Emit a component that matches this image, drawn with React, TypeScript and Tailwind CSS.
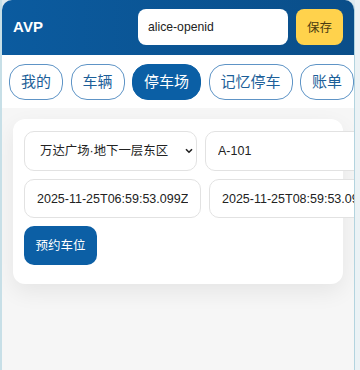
import React, { useState } from 'react';

const TABS = ['我的', '车辆', '停车场', '记忆停车', '账单'];

const App: React.FC = () => {
  const [openid, setOpenid] = useState('alice-openid');
  const [active, setActive] = useState('停车场');
  const [lot, setLot] = useState('wanda-b1-east');
  const [spot, setSpot] = useState('A-101');
  const [start, setStart] = useState('2025-11-25T06:59:53.099Z');
  const [end, setEnd] = useState('2025-11-25T08:59:53.099Z');

  return (
    <div className="h-[370px] flex bg-[#dfeaef] font-['Liberation_Sans','Noto_Sans_CJK_SC',sans-serif] overflow-hidden">
      {/* left edge strip */}
      <div className="w-[2px] shrink-0 bg-[#c7dfe7]" />

      <div className="w-[353px] shrink-0 flex flex-col overflow-hidden rounded-t-[10px] border-r border-[#b3d4df] bg-[#f6f6f6]">
        {/* Header */}
        <div className="h-[55px] shrink-0 flex items-center justify-between pl-[11px] pr-[11px] pb-[1px] bg-gradient-to-r from-[#0b5b9f] to-[#0a4e89]">
          <span className="text-white font-bold text-[15px] tracking-[0.2px]">AVP</span>
          <div className="flex items-center gap-2">
            <input
              value={openid}
              onChange={(e) => setOpenid(e.target.value)}
              className="w-[150px] h-[36px] rounded-[8px] bg-white px-[10px] text-[12.2px] text-[#222] outline-none"
            />
            <button className="w-[47px] h-[36px] rounded-[8px] bg-[#ffd24c] text-[12.5px] text-[#4b3c12] font-['Noto_Sans_CJK_SC',sans-serif]">
              保存
            </button>
          </div>
        </div>

        {/* Tabs */}
        <div className="h-[53px] shrink-0 flex items-center gap-[7.5px] pl-[7px] bg-white overflow-hidden">
          {TABS.map((t) => (
            <button
              key={t}
              onClick={() => setActive(t)}
              className={
                t === active
                  ? "shrink-0 h-[36px] px-[11px] rounded-[16px] border border-[#0b5fa5] bg-[#0b5fa5] text-white text-[15px] font-['Noto_Sans_CJK_SC',sans-serif]"
                  : "shrink-0 h-[36px] px-[11px] rounded-[16px] border border-[#5e94c6] bg-white text-[#1d5f99] text-[15px] font-['Noto_Sans_CJK_SC',sans-serif]"
              }
            >
              {t}
            </button>
          ))}
        </div>

        {/* Reservation card */}
        <div className="mx-[11px] mt-[11px] rounded-[12px] bg-white pt-[12px] pb-[19px] px-[11px] shadow-[0_8px_22px_rgba(0,0,0,0.07)]">
          <div className="flex flex-col gap-2">
            <div className="flex gap-2">
              <div className="relative shrink-0">
                <select
                  value={lot}
                  onChange={(e) => setLot(e.target.value)}
                  className="appearance-none w-[173px] h-[40px] rounded-[10px] border border-[#e2e2e2] bg-white pl-[15px] pr-4 text-[12.4px] text-[#222] outline-none"
                >
                  <option value="wanda-b1-east">万达广场·地下一层东区</option>
                </select>
                <svg
                  className="absolute right-[4px] top-[17px] pointer-events-none"
                  width="8"
                  height="6"
                  viewBox="0 0 8 6"
                  fill="none"
                >
                  <path d="M1 1.2 L4 4.2 L7 1.2" stroke="#222" strokeWidth="1.6" />
                </svg>
              </div>
              <input
                value={spot}
                onChange={(e) => setSpot(e.target.value)}
                className="shrink-0 w-[177px] h-[40px] rounded-[10px] border border-[#e2e2e2] bg-white px-3 text-[12.5px] text-[#222] outline-none"
              />
            </div>
            <div className="flex gap-2">
              <input
                value={start}
                onChange={(e) => setStart(e.target.value)}
                className="shrink-0 w-[177px] h-[39px] rounded-[10px] border border-[#e2e2e2] bg-white px-3 text-[12.5px] text-[#222] outline-none"
              />
              <input
                value={end}
                onChange={(e) => setEnd(e.target.value)}
                className="shrink-0 w-[177px] h-[39px] rounded-[10px] border border-[#e2e2e2] bg-white px-3 text-[12.5px] text-[#222] outline-none"
              />
            </div>
            <div>
              <button className="w-[73px] h-[39px] rounded-[10px] bg-[#0c5fa5] text-white text-[12.5px] font-['Noto_Sans_CJK_SC',sans-serif]">
                预约车位
              </button>
            </div>
          </div>
        </div>
      </div>

      <div className="flex-1 bg-[#ebf2f5]" />
    </div>
  );
};

export default App;
